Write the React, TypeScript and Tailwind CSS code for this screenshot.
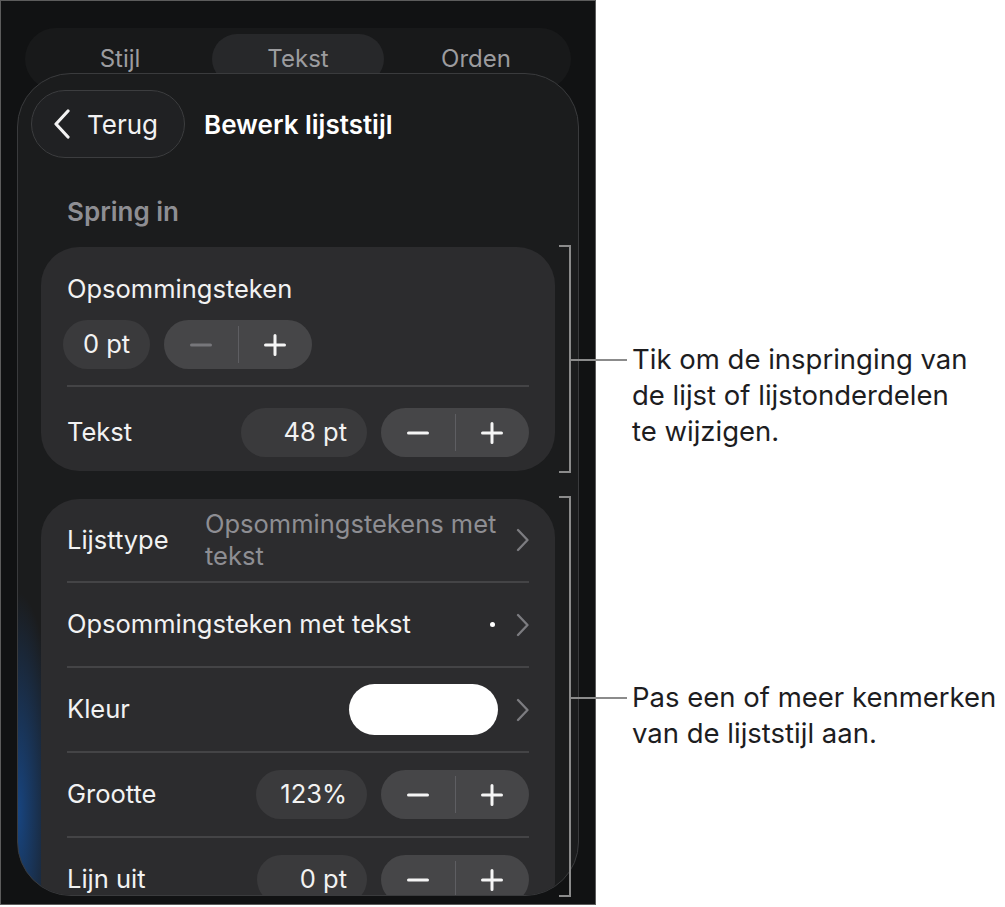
import React from 'react';

const font = "font-['Inter',sans-serif]";

function ChevronLeft() {
  return (
    <svg width="18" height="30" viewBox="0 0 18 30" fill="none" className="shrink-0">
      <path d="M15 2L3 15l12 13" stroke="#f2f2f2" strokeWidth="3.2" strokeLinecap="round" strokeLinejoin="round" />
    </svg>
  );
}

function ChevronRight() {
  return (
    <svg width="13" height="24" viewBox="0 0 13 24" fill="none" className="shrink-0">
      <path d="M2 2l9.5 10L2 22" stroke="#7c7c80" strokeWidth="2.3" strokeLinecap="round" strokeLinejoin="round" />
    </svg>
  );
}

function Stepper({ dimMinus = false }: { dimMinus?: boolean }) {
  return (
    <div className="flex h-[49px] w-[148px] shrink-0 items-center rounded-full bg-[#464648]">
      <div className="flex flex-1 items-center justify-center">
        <svg width="22" height="22" viewBox="0 0 22 22">
          <path d="M1.5 11h19" stroke={dimMinus ? '#77777b' : '#f5f5f5'} strokeWidth="3" strokeLinecap="round" />
        </svg>
      </div>
      <div className="h-[37px] w-px bg-[#5e5e62]" />
      <div className="flex flex-1 items-center justify-center">
        <svg width="22" height="22" viewBox="0 0 22 22">
          <path d="M1.5 11h19M11 1.5v19" stroke="#f5f5f5" strokeWidth="3" strokeLinecap="round" />
        </svg>
      </div>
    </div>
  );
}

function ValuePill({ value, width }: { value: string; width: string }) {
  return (
    <div className={`flex h-[49px] shrink-0 items-center justify-end rounded-full bg-[#3a3a3c] pr-[20px] text-[#f2f2f2] ${width}`}>
      {value}
    </div>
  );
}

function Divider() {
  return <div className="mx-[26px] h-[2px] bg-[#444446]" />;
}

export default function App() {
  return (
    <div className={`${font} relative flex h-[907px] w-[1005px] bg-white`}>
      {/* phone panel */}
      <div className="flex h-[905px] w-[596px] shrink-0 flex-col border border-[#5c5c5c] bg-[#111213] px-[16px]">
        {/* segmented tabs */}
        <div className="ml-[8px] mr-[8px] mt-[27px] grid h-[62px] grid-cols-3 rounded-[31px] bg-[#18191a] px-[6px] pt-[6px] text-[24px] text-[#9c9c9f]">
          <div className="flex h-[50px] items-center justify-center">Stijl</div>
          <div className="mx-[3px] flex h-[50px] items-center justify-center rounded-full bg-[#27282a]">Tekst</div>
          <div className="flex h-[50px] items-center justify-center">Orden</div>
        </div>

        {/* sheet */}
        <div className="mt-[-17px] flex h-[823px] flex-col overflow-hidden rounded-[54px] border border-[#3a3b3d] bg-[#1b1c1d] bg-[radial-gradient(ellipse_40px_220px_at_0%_90%,rgba(22,86,170,0.7),transparent_100%)] px-[23px]">
          <div className="ml-[-10px] mt-[16px] flex h-[68px] items-center">
            <div className="flex h-[68px] w-[154px] items-center rounded-full border border-[#3c3d3f] bg-[#202123] pl-[21px]">
              <ChevronLeft />
              <span className="ml-[16px] text-[26px] text-[#f2f2f2]">Terug</span>
            </div>
            <div className="ml-[19px] text-[26px] font-semibold text-white">Bewerk lijststijl</div>
          </div>

          <div className="ml-[26px] mt-[40px] text-[26px] font-semibold leading-[28px] text-[#8e8e93]">Spring in</div>

          {/* indent card */}
          <div className="mt-[21px] shrink-0 rounded-[38px] bg-[#2c2c2e] text-[25.5px] text-[#f2f2f2]">
            <div className="px-[26px] pb-[16px] pt-[28px]">
              <div className="leading-[28px]">Opsommingsteken</div>
              <div className="ml-[-4px] mt-[17px] flex items-center gap-[14px]">
                <div className="flex h-[49px] w-[87px] items-center justify-center rounded-full bg-[#3a3a3c]">0 pt</div>
                <Stepper dimMinus />
              </div>
            </div>
            <Divider />
            <div className="flex items-center px-[26px] pb-[14px] pt-[21px]">
              <span>Tekst</span>
              <div className="ml-auto flex items-center gap-[14px]">
                <ValuePill value="48 pt" width="w-[126px]" />
                <Stepper />
              </div>
            </div>
          </div>

          {/* list style card */}
          <div className="mt-[28px] shrink-0 rounded-[38px] bg-[#2c2c2e] text-[25.5px] text-[#f2f2f2]">
            <div className="flex h-[82px] items-center px-[26px]">
              <span className="w-[138px] shrink-0">Lijsttype</span>
              <span className="w-[300px] leading-[32px] text-[#8e8e93]">Opsommingstekens met tekst</span>
              <div className="ml-auto">
                <ChevronRight />
              </div>
            </div>
            <Divider />
            <div className="flex h-[83px] items-center px-[26px]">
              <span>Opsommingsteken met tekst</span>
              <div className="ml-auto flex items-center gap-[21px]">
                <div className="h-[5px] w-[5px] rounded-full bg-white" />
                <ChevronRight />
              </div>
            </div>
            <Divider />
            <div className="flex h-[83px] items-center px-[26px]">
              <span>Kleur</span>
              <div className="ml-auto flex items-center gap-[18px]">
                <div className="h-[51px] w-[149px] rounded-full bg-white" />
                <ChevronRight />
              </div>
            </div>
            <Divider />
            <div className="flex h-[83px] items-center px-[26px]">
              <span>Grootte</span>
              <div className="ml-auto flex items-center gap-[14px]">
                <ValuePill value="123%" width="w-[111px]" />
                <Stepper />
              </div>
            </div>
            <Divider />
            <div className="flex h-[83px] items-center px-[26px]">
              <span>Lijn uit</span>
              <div className="ml-auto flex items-center gap-[14px]">
                <ValuePill value="0 pt" width="w-[110px]" />
                <Stepper />
              </div>
            </div>
          </div>
        </div>
      </div>

      {/* callout text */}
      <div className="ml-[36px] flex flex-col pt-[341px] text-[27.5px] leading-[36px] text-[#1d1d1f]">
        <p>
          Tik om de inspringing van
          <br />
          de lijst of lijstonderdelen
          <br />
          te wijzigen.
        </p>
        <p className="mt-[230px]">
          Pas een of meer kenmerken
          <br />
          van de lijststijl aan.
        </p>
      </div>

      {/* brackets */}
      <div className="absolute left-[559px] top-[245px] h-[228px] w-[12px] border-y-2 border-r-2 border-[#8b8b8b]" />
      <div className="absolute left-[571px] top-[359px] h-[2px] w-[56px] bg-[#8b8b8b]" />
      <div className="absolute left-[559px] top-[496px] h-[401px] w-[12px] border-y-2 border-r-2 border-[#8b8b8b]" />
      <div className="absolute left-[571px] top-[697px] h-[2px] w-[56px] bg-[#8b8b8b]" />
    </div>
  );
}
